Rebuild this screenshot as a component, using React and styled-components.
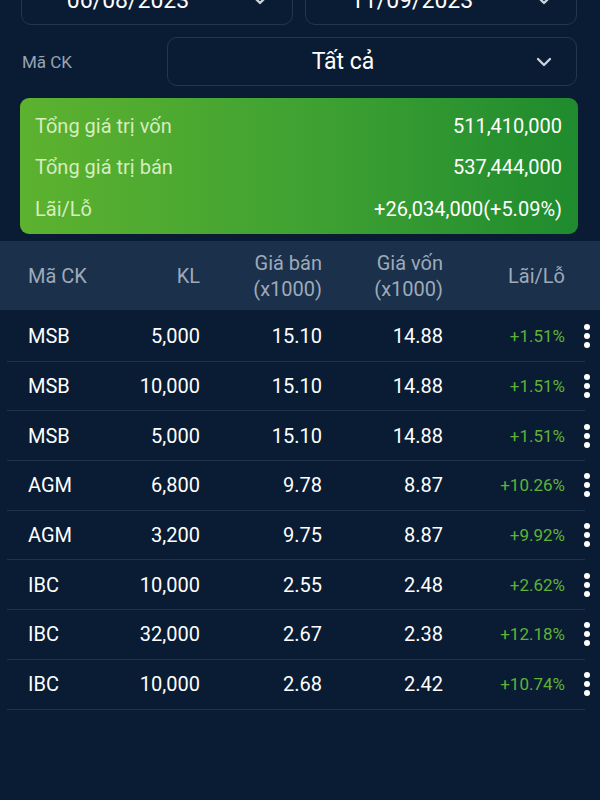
import React from "react";
import styled, { createGlobalStyle } from "styled-components";

var Global = createGlobalStyle`
	html, body {
		margin: 0;
		padding: 0;
		background: #091c34;
	}
	body {
		font-family: Roboto, "Noto Sans", "Liberation Sans", sans-serif;
		overflow: hidden;
	}
`;

var Page = styled.div`
	width: 600px;
	height: 800px;
	background: #091c34;
	color: #fff;
	overflow: hidden;
`;

var DateRow = styled.div`
	display: grid;
	grid-template-columns: 1fr 1fr;
	gap: 12px;
	margin: -25px 23px 0 21px;
`;

var Field = styled.div`
	display: flex;
	align-items: center;
	height: ${(p) => p.h || 50}px;
	border: 1px solid #24364d;
	border-radius: 10px;
	box-sizing: border-box;
`;

var FieldText = styled.span`
	flex: 1;
	text-align: center;
	font-size: 23px;
	color: #fff;
	padding-left: 6px;
`;

var Chevron = styled.span`
	width: 64px;
	display: flex;
	justify-content: center;
	svg {
		display: block;
	}
`;

var FilterRow = styled.div`
	display: flex;
	align-items: center;
	margin: 12px 23px 0 22px;
`;

var Label = styled.span`
	width: 145px;
	font-size: 17px;
	color: #98a4b3;
`;

var Select = styled(Field)`
	flex: 1;
`;

var Card = styled.div`
	margin: 12px 22px 0 20px;
	height: 136px;
	box-sizing: border-box;
	padding: 8px 16px 6px 15px;
	border-radius: 9px;
	background: linear-gradient(90deg, #5db22f 0%, #40a232 50%, #1f8b2e 100%);
	display: flex;
	flex-direction: column;
	justify-content: space-between;
`;

var CardRow = styled.div`
	display: flex;
	justify-content: space-between;
	align-items: center;
	height: 39px;
	font-size: 20px;
`;

var CardLabel = styled.span`
	color: #d6edbf;
`;

var CardValue = styled.span`
	color: #ffffff;
`;

var Head = styled.div`
	margin-top: 7px;
	height: 69px;
	background: #1b304b;
	display: flex;
	align-items: center;
`;

var Grid = styled.div`
	display: grid;
	grid-template-columns: 80px 92px 122px 121px 122px 1fr;
	align-items: center;
	width: 100%;
	box-sizing: border-box;
`;

var HeadGrid = styled(Grid)`
	padding: 0 15px 0 28px;
	color: #9eaab8;
	font-size: 20px;
	line-height: 26px;
`;

var Cell = styled.div`
	text-align: ${(p) => (p.left ? "left" : "right")};
	white-space: nowrap;
`;

var Row = styled(Grid)`
	height: 49.7px;
	width: auto;
	margin: 0 15px 0 7px;
	padding-left: 21px;
	border-bottom: 1px solid #1f334c;
	font-size: 20px;
	color: #fff;
`;

var Pct = styled(Cell)`
	font-size: 17px;
	color: #5fb236;
`;

var Kebab = styled.div`
	display: flex;
	flex-direction: column;
	gap: 3px;
	padding-left: 19px;
	span {
		width: 6px;
		height: 6px;
		border-radius: 50%;
		background: #fff;
	}
`;

var Rows = styled.div`
	padding-top: 2px;
`;

function Down() {
	return (
		<svg width="18" height="12" viewBox="0 0 18 12">
			<path d="M3 3l6 6 6-6" fill="none" stroke="#c9d1db" strokeWidth="2.4" strokeLinecap="round" strokeLinejoin="round" />
		</svg>
	);
}

var data = [
	["MSB", "5,000", "15.10", "14.88", "+1.51%"],
	["MSB", "10,000", "15.10", "14.88", "+1.51%"],
	["MSB", "5,000", "15.10", "14.88", "+1.51%"],
	["AGM", "6,800", "9.78", "8.87", "+10.26%"],
	["AGM", "3,200", "9.75", "8.87", "+9.92%"],
	["IBC", "10,000", "2.55", "2.48", "+2.62%"],
	["IBC", "32,000", "2.67", "2.38", "+12.18%"],
	["IBC", "10,000", "2.68", "2.42", "+10.74%"],
];

export default function App() {
	return (
		<Page>
			<Global />
			<DateRow>
				<Field>
					<FieldText>06/08/2023</FieldText>
					<Chevron>
						<Down />
					</Chevron>
				</Field>
				<Field>
					<FieldText>11/09/2023</FieldText>
					<Chevron>
						<Down />
					</Chevron>
				</Field>
			</DateRow>
			<FilterRow>
				<Label>Mã CK</Label>
				<Select h={49}>
					<FieldText>Tất cả</FieldText>
					<Chevron>
						<Down />
					</Chevron>
				</Select>
			</FilterRow>
			<Card>
				<CardRow>
					<CardLabel>Tổng giá trị vốn</CardLabel>
					<CardValue>511,410,000</CardValue>
				</CardRow>
				<CardRow>
					<CardLabel>Tổng giá trị bán</CardLabel>
					<CardValue>537,444,000</CardValue>
				</CardRow>
				<CardRow>
					<CardLabel>Lãi/Lỗ</CardLabel>
					<CardValue>+26,034,000(+5.09%)</CardValue>
				</CardRow>
			</Card>
			<Head>
				<HeadGrid>
					<Cell left>Mã CK</Cell>
					<Cell>KL</Cell>
					<Cell>
						Giá bán
						<br />
						(x1000)
					</Cell>
					<Cell>
						Giá vốn
						<br />
						(x1000)
					</Cell>
					<Cell>Lãi/Lỗ</Cell>
					<div />
				</HeadGrid>
			</Head>
			<Rows>
				{data.map(([code, kl, sell, cost, pct], i) => (
					<Row key={i}>
						<Cell left>{code}</Cell>
						<Cell>{kl}</Cell>
						<Cell>{sell}</Cell>
						<Cell>{cost}</Cell>
						<Pct>{pct}</Pct>
						<Kebab>
							<span />
							<span />
							<span />
						</Kebab>
					</Row>
				))}
			</Rows>
		</Page>
	);
}
